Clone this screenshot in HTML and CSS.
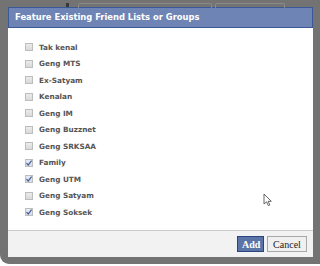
FILE: index.html
```html
<!DOCTYPE html>
<html>
<head>
<meta charset="utf-8">
<link rel="stylesheet" href="styles.css">
</head>
<body>
<div class="frame">
  <div class="bgline bg1"></div>
  <div class="bgline bg2"></div>
  <div class="bgmark"></div>
  <div class="dialog">
    <div class="header">Feature Existing Friend Lists or Groups</div>
    <div class="content">
      <ul class="list">
        <li class="item"><span class="cb"></span>Tak kenal</li>
        <li class="item"><span class="cb"></span>Geng MTS</li>
        <li class="item"><span class="cb"></span>Ex-Satyam</li>
        <li class="item"><span class="cb"></span>Kenalan</li>
        <li class="item"><span class="cb"></span>Geng IM</li>
        <li class="item"><span class="cb"></span>Geng Buzznet</li>
        <li class="item"><span class="cb"></span>Geng SRKSAA</li>
        <li class="item"><span class="cb checked"><svg viewBox="0 0 8 8" width="8" height="8"><path d="M1.5 4.2 L3.2 6 L6.6 1.6" fill="none" stroke="#3d5c9e" stroke-width="1.2"/></svg></span>Family</li>
        <li class="item"><span class="cb checked"><svg viewBox="0 0 8 8" width="8" height="8"><path d="M1.5 4.2 L3.2 6 L6.6 1.6" fill="none" stroke="#3d5c9e" stroke-width="1.2"/></svg></span>Geng UTM</li>
        <li class="item"><span class="cb"></span>Geng Satyam</li>
        <li class="item"><span class="cb checked"><svg viewBox="0 0 8 8" width="8" height="8"><path d="M1.5 4.2 L3.2 6 L6.6 1.6" fill="none" stroke="#3d5c9e" stroke-width="1.2"/></svg></span>Geng Soksek</li>
      </ul>
      <svg class="cursor" viewBox="0 0 10 14" width="10" height="14"><path d="M1 1 L1 11 L3.5 8.8 L5.3 12.6 L6.8 11.9 L5.1 8.3 L8.3 8.3 Z" fill="#fff" stroke="#555" stroke-width="0.9" stroke-linejoin="round"/></svg>
    </div>
    <div class="footer">
      <button class="btn btn-add">Add</button>
      <button class="btn btn-cancel">Cancel</button>
    </div>
  </div>
</div>
</body>
</html>
```
FILE: styles.css
```css
html, body {
  margin: 0;
  padding: 0;
  background: #ffffff;
}
.frame {
  position: relative;
  width: 320px;
  height: 264px;
  box-sizing: border-box;
  background: #737373;
  border-radius: 0 0 0 9px;
  padding: 7px 7px 7px 8px;
  display: flex;
}
.bgline {
  position: absolute;
  top: 3px;
  height: 4px;
  border: 1px solid #8a8a8a;
  border-bottom: none;
  border-radius: 2px 2px 0 0;
}
.bg1 { left: 78px; width: 132px; }
.bg2 { left: 215px; width: 68px; }
.bgmark {
  position: absolute;
  left: 66px;
  top: 3px;
  width: 3px;
  height: 4px;
  background: #3a3a3a;
}
.dialog {
  flex: 1;
  background: #ffffff;
  display: flex;
  flex-direction: column;
}
.header {
  height: 19px;
  background: #6d84b4;
  border: 1px solid #3b5998;
  color: #ffffff;
  font-family: "DejaVu Sans", sans-serif;
  font-weight: bold;
  font-size: 8.4px;
  line-height: 19px;
  padding-left: 6px;
}
.content {
  position: relative;
  flex: 1;
}
.list {
  list-style: none;
  margin: 0;
  padding: 11px 0 0 17px;
}
.item {
  display: flex;
  align-items: center;
  height: 16.5px;
  font-family: "DejaVu Sans", sans-serif;
  font-weight: bold;
  font-size: 7.3px;
  color: #555555;
}
.cb {
  width: 6px;
  height: 6px;
  border: 1px solid #bdbdbd;
  background: linear-gradient(#ebebeb, #d9d9d9);
  margin-right: 6px;
  position: relative;
  flex: none;
}
.cb.checked {
  background: linear-gradient(#e8ebf2, #d6dbe6);
}
.cb svg {
  position: absolute;
  left: -1px;
  top: -1px;
}
.cursor {
  position: absolute;
  left: 255px;
  top: 165px;
}
.footer {
  height: 27px;
  box-sizing: border-box;
  border-top: 1px solid #cccccc;
  background: #f2f2f2;
  display: flex;
  justify-content: flex-end;
  align-items: center;
  gap: 3px;
  padding: 0 6px 0 0;
}
.btn {
  height: 16px;
  font-family: "Liberation Serif", serif;
  font-weight: bold;
  font-size: 10px;
  padding: 0 4px;
  margin: 0;
  cursor: default;
}
.btn-add {
  width: 27px;
  background: #5b74a8;
  border: 1px solid #29447e;
  color: #ffffff;
}
.btn-cancel {
  width: 40px;
  background: #f0f0f0;
  border: 1px solid #a8a8a8;
  color: #222222;
  font-weight: normal;
}
```
